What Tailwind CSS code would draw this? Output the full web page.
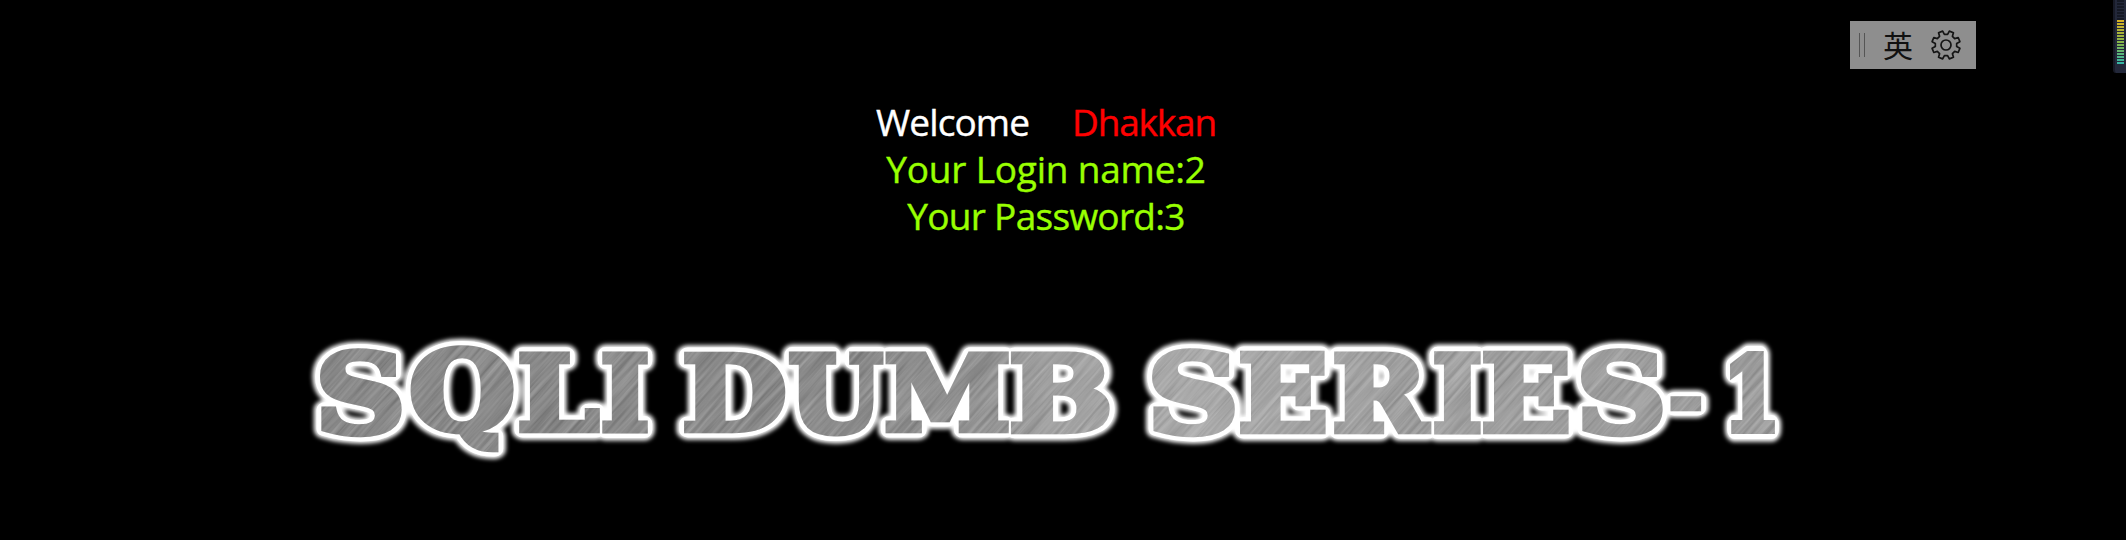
<!DOCTYPE html>
<html lang="en">
<head>
<meta charset="utf-8">
<title>SQLI Dumb Series-1</title>
<script src="https://cdn.jsdelivr.net/npm/@tailwindcss/browser@4"></script>
</head>
<body class="bg-black overflow-hidden">
<main class="w-[2126px] h-[540px] flex flex-col pt-[98px] overflow-hidden">
  <div class="w-[2092px] flex flex-col items-center font-['Open_Sans',sans-serif] text-[37px] leading-[47px] whitespace-nowrap [-webkit-text-stroke:0.4px_currentColor]">
    <div class="flex gap-[43px] h-[47px]"><span class="text-white tracking-[-0.9px]">Welcome</span><span class="text-[#ff0000] tracking-[-1.2px]">Dhakkan</span></div>
    <div class="text-[#99ff00] tracking-[-0.2px]">Your Login name:2</div>
    <div class="text-[#99ff00] tracking-[-0.7px]">Your Password:3</div>
  </div>
  <svg class="mt-[61px] block shrink-0" width="2126" height="240" viewBox="0 300 2126 240" font-family="DejaVu Serif" font-weight="700" font-size="100">
    <defs>
      <g id="word"></g>
      <filter id="soft" x="290" y="320" width="1520" height="160" filterUnits="userSpaceOnUse"><feGaussianBlur stdDeviation="2.2"/></filter>
      <filter id="brush" x="-900" y="-900" width="1800" height="1800" filterUnits="userSpaceOnUse" color-interpolation-filters="sRGB">
        <feTurbulence type="fractalNoise" baseFrequency="0.012 0.3" numOctaves="3" seed="4"/>
        <feColorMatrix values="0.26 0 0 0 0.44  0.26 0 0 0 0.44  0.26 0 0 0 0.44  0 0 0 0 1"/>
      </filter>
      <linearGradient id="tone" gradientUnits="userSpaceOnUse" x1="319" x2="1776" y1="0" y2="0">
        <stop offset="0" stop-color="#000" stop-opacity=".06"/><stop offset=".36" stop-color="#000" stop-opacity=".05"/>
        <stop offset=".5" stop-color="#fff" stop-opacity=".13"/><stop offset=".6" stop-color="#fff" stop-opacity=".22"/><stop offset=".75" stop-color="#fff" stop-opacity=".12"/><stop offset="1" stop-color="#fff" stop-opacity=".08"/>
      </linearGradient>
      <mask id="face" maskUnits="userSpaceOnUse" x="290" y="320" width="1520" height="160"><use href="#word" fill="#fff" stroke="#fff" style="--w:7"/></mask>
    </defs>
    <use href="#word" fill="#fff" stroke="#fff" style="--w:21" stroke-linejoin="round" filter="url(#soft)"/>
    <use href="#word" fill="#fff" stroke="#fff" style="--w:16" stroke-linejoin="round"/>
    <g mask="url(#face)">
      <g transform="translate(680 400) rotate(-48)"><rect x="-900" y="-900" width="1800" height="1800" filter="url(#brush)"/></g>
      <g transform="translate(1450 400) rotate(-48)"><rect x="-540" y="-540" width="1080" height="1080" filter="url(#brush)"/></g>
      <rect x="300" y="330" width="1500" height="140" fill="url(#tone)"/>
    </g>
  </svg>
</main>

<div class="absolute left-[1850px] top-[21px] w-[126px] h-[48px] bg-[#8e8e8e] flex items-center pl-[9px] text-[#111]">
  <div class="w-[6px] h-[24px] border-x border-[#555]"></div>
  <span class="ml-[18px] text-[30px] leading-[48px] -mt-[2px] font-['Noto_Sans_CJK_SC',sans-serif]">英</span>
  <svg class="ml-[17px]" width="32" height="32" viewBox="-16 -16 32 32" fill="none" stroke="#151515" stroke-width="1.7" stroke-linejoin="round"><path id="gear"/><circle r="5"/></svg>
</div>

<div class="absolute left-[2113px] top-0 w-[13px] h-[73px] bg-[#23283a] rounded-bl-[3px] border-l-2 border-[#171a26] pl-[2px]">
  <div class="w-[7px] h-[20px] bg-[repeating-linear-gradient(#151925_0_2px,#23283a_2px_3px)]"></div>
  <div class="w-[7px] h-[45px] bg-[linear-gradient(#d8b023,#86b54a_50%,#2fb5ac)] relative">
    <div class="absolute inset-0 bg-[repeating-linear-gradient(transparent_0_2px,#23283a_2px_3px)]"></div>
  </div>
</div>
<script>
  // letter, left, right, top, bottom of its face
  const letters = [
    ['S',319,403,347,437],['Q',410,514,345,452],['L',518,601,351,434],['I',601,649,351,434],
    ['D',683,786,351,434],['U',788,885,351,437],['M',885,1009,351,434],['B',1010,1110,351,435],
    ['S',1151,1236,347,437],['E',1239,1327,351,435],['R',1333,1432,351,435],['I',1433,1482,351,435],
    ['E',1482,1570,351,435],['S',1580,1664,347,437],['-',1670,1702,395,412],['1',1729,1776,351,434]];
  const ctx = document.createElement('canvas').getContext('2d');
  ctx.font = '700 100px "DejaVu Serif"';
  const word = document.getElementById('word');
  const inset = 4;
  for (const [ch, l, r, t, b] of letters) {
    const m = ctx.measureText(ch);
    const L = -m.actualBoundingBoxLeft, R = m.actualBoundingBoxRight, T = -m.actualBoundingBoxAscent, B = m.actualBoundingBoxDescent;
    const sx = (r - l - 2 * inset) / (R - L), sy = (b - t - 2 * inset) / (B - T);
    const e = document.createElementNS('http://www.w3.org/2000/svg', 'text');
    e.textContent = ch;
    e.style.strokeWidth = `calc(var(--w) * ${1 / Math.sqrt(sx * sy)}px)`;
    e.setAttribute('transform', `matrix(${sx} 0 0 ${sy} ${l + inset - L * sx} ${t + inset - T * sy})`);
    word.appendChild(e);
  }
  // gear outline: n teeth around the circle
  let d = '';
  const n = 8;
  for (let i = 0; i < n; i++) {
    [[-.31,10.8],[-.2,14.3],[.2,14.3],[.31,10.8]].forEach(([o, rad], k) => {
      const a = (i + .5 + o) * 2 * Math.PI / n - Math.PI / 2;
      d += (i || k ? 'L' : 'M') + (rad * Math.cos(a)).toFixed(2) + ' ' + (rad * Math.sin(a)).toFixed(2);
    });
  }
  document.getElementById('gear').setAttribute('d', d + 'Z');
</script>
</body>
</html>
